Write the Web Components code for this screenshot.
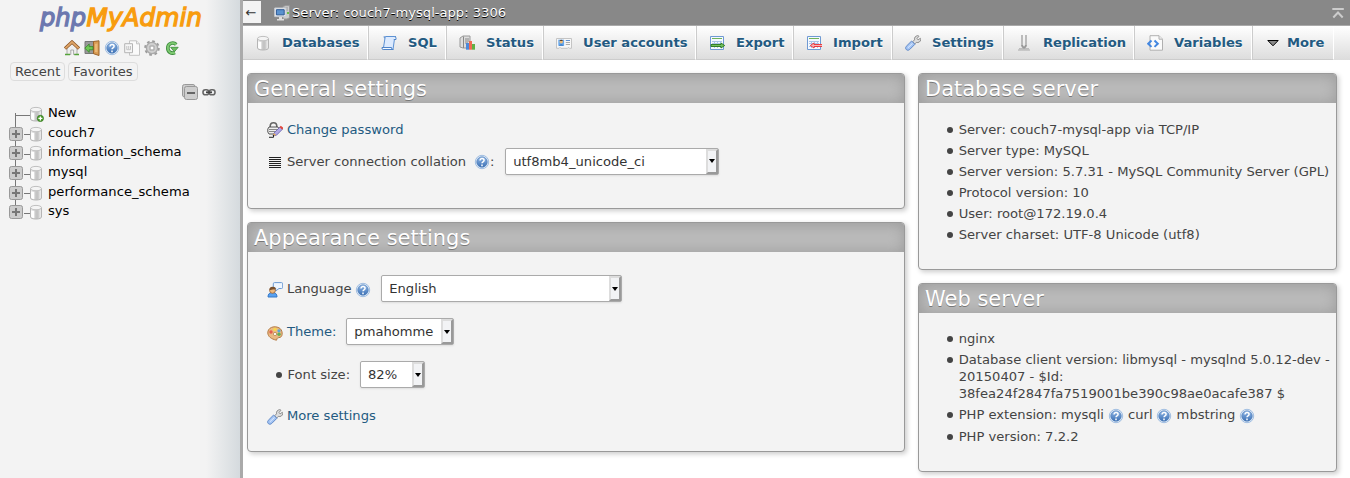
<!DOCTYPE html>
<html lang="en"><head><meta charset="utf-8"><title>phpMyAdmin</title>
<style>html,body{margin:0;height:100%;background:#fff;overflow:hidden}body{font:13.12px/17px "DejaVu Sans",sans-serif;color:#444}</style></head>
<body><pma-app></pma-app>
<script>
const cyl='<path d="M2.5 3.5v9.5c0 1.2 2.3 2 5.5 2s5.5-.8 5.5-2V3.5" fill="url(#c)" stroke="#b5b5b5"/><path d="M3.2 7v5.8q1.3 1.3 3 1.3V7z" fill="#fff"/><path d="M7.5 6.5h3v7.5h-3z" fill="#c4c4c4"/><ellipse cx="8" cy="3.6" rx="5.5" ry="2.2" fill="#f4f4f4" stroke="#c0c0c0"/>';
const defs='<defs><linearGradient id="c"><stop stop-color="#f6f6f6"/><stop offset=".6" stop-color="#c4c4c4"/><stop offset="1" stop-color="#f2f2f2"/></linearGradient><linearGradient id="b" x2="0" y2="1"><stop stop-color="#92b8e6"/><stop offset="1" stop-color="#3b70b5"/></linearGradient></defs>';
const sheet='<path d="M1.5 1.5h13v13h-13z" fill="#f5f9ff" stroke="#6f9ad3"/><path d="M3 3.5h10" stroke="#70b35b"/><path d="M3 6.5h10M3 8.5h10M3 11.5h10M5.5 6v7M8.5 6v7M11.5 6v7" stroke="#a9c4e8"/>';
const icons={
db:cyl,
newdb:cyl+'<circle cx="12.4" cy="12.4" r="3.1" fill="#4d9d2c" stroke="#2f741b" stroke-width=".7"/><path d="M12.4 10.4v4M10.4 12.4h4" stroke="#fff" stroke-width="1.3"/>',
home:'<path d="M3 8v6.5h3.8V10h2.8v4.5H13V8L8 3z" fill="#eee" stroke="#999" stroke-width=".8"/><path d="M1 8.6 8 2l7 6.6" fill="none" stroke="#8c5524" stroke-width="3.2"/><path d="M1.3 8.4 8 2.1l6.7 6.3" fill="none" stroke="#dfa568" stroke-width="1.8"/><path d="M1 14.5h5M10.3 14.5H15" stroke="#55a43b" stroke-width="1.5"/>',
exit:'<path d="M1 1.5h9v12H1z" fill="#999" stroke="#777"/><path d="M9.5 1.5 15 .8v14.7l-5.5-1.8z" fill="#d99b54" stroke="#9b642b"/><path d="m11 4 2.5-.4v8.7L11 12z" fill="#eab876"/><path d="M.8 8.2 5.2 4v2.6H9v3.2H5.2v2.6z" fill="#6fc855" stroke="#37842b" stroke-width=".8"/>',
help:'<circle cx="8" cy="8" r="6.7" fill="#edf4fc" stroke="#8aaedb" stroke-width=".8"/><circle cx="8" cy="8" r="5.3" fill="url(#b)" stroke="#4777b4" stroke-width=".6"/><path d="M6 6.5c0-2.8 4.1-2.5 4.1-.2C10.1 8 8 7.7 8 9.2M8 10.5v1.7" fill="none" stroke="#fff" stroke-width="1.5"/>',
docs:'<path d="M5.5.8h7l3 3v11.5h-10z" fill="#fafafa" stroke="#c4c4c4"/><path d="M12.5.8v3h3" fill="#eee" stroke="#c4c4c4"/><path d="M.7 3.7h7.8v9H.7z" fill="#f6f6f6" stroke="#b4b4b4"/><path d="M2.8 6v3.7h3.7V6M4.7 6v3" fill="none" stroke="#c4c4c4"/>',
gear:'<circle cx="8" cy="8" r="6.8" fill="none" stroke="#9c9c9c" stroke-width="2" stroke-dasharray="2.7 2.64"/><circle cx="8" cy="8" r="4.4" fill="none" stroke="#aaa" stroke-width="3.8"/><circle cx="8" cy="8" r="4" fill="none" stroke="#d0d0d0" stroke-width="1.8"/><circle cx="8" cy="8" r="2" fill="#fff" stroke="#888" stroke-width=".7"/>',
reload:'<path d="M12.2 4.6C9.3 1.6 3.8 3.2 3.8 8c0 4.2 3.5 6 7.2 4.6" fill="none" stroke="#3b8a3b" stroke-width="3.6"/><path d="M12.2 4.6C9.3 1.6 3.8 3.2 3.8 8c0 4.2 3.5 6 7.2 4.6" fill="none" stroke="#7cc870" stroke-width="2"/><path d="M6.6 7.3h7.6l-3.8 4.5z" fill="#6cbd60" stroke="#3b8a3b" stroke-width=".8"/>',
sql:'<path d="M5 1.5h10c-2 0-1.3 2.3-1.8 4.5L12 14.5H2.2L4 3Q3.7 1.4 5 1.5z" fill="#dceafe" stroke="#5c91d4"/><path d="M3.3 1.2q-1 1.2.7 2M1 12.5h9.5q0 2.5 1.8 2H2.3Q.5 14.4 1 12.5zM12.8 4.5H15q.8-2.5-1.5-3" fill="#f5faff" stroke="#4f84c9"/>',
status:'<path d="M1 3 4 1h7v12H4l-3-1z" fill="#ddd" stroke="#999"/><path d="M4.5 1.5V13M6 4h4M6 6h4M6 8h3" stroke="#888"/><path d="M7 8h3v6.7H7z" fill="#4b89dc"/><path d="M10 6h3v8.7h-3z" fill="#f06a52"/><path d="M13 9h3v5.7h-3z" fill="#60b044"/>',
users:'<path d="M.5 3.5h15v9.8h-2l-1-1-1 1H5l-1-1-1 1H.5z" fill="#f7f7f7" stroke="#c4c4c4"/><path d="M2.3 4.7h5.8v6H2.3z" fill="#67a8ee"/><circle cx="5.2" cy="6.8" r="1.7" fill="#eaba78"/><path d="M3.5 6q1.7-2.4 3.5 0z" fill="#573e27"/><path d="M2.5 10.7q2.7-3 5.5 0" fill="#3277c3"/><path d="M9.8 5.5H14" stroke="#6292d1"/><path d="M9.8 7.5H14M9.8 9.5H14" stroke="#aaa"/>',
exp:sheet+'<path d="M2 9.5h10V8l3.7 2.5L12 13v-1.5H2z" fill="#73c15f" stroke="#28761c" stroke-width=".9"/>',
imp:sheet+'<path d="M16.5 9.5H8V8l-3.7 2.5L8 13v-1.5h8.5z" fill="#f8b5b5" stroke="#ec2d32" stroke-width=".9"/>',
wrench:'<path d="m7.8 6.7 1.7-1.9Q9 1.4 12.8.6l1.2.7-2 2.1 1.1 1.5 2.2-1.6.6.8c-.3 2.9-2.5 3.9-4.6 3.3L9.5 9.2z" fill="#ddd" stroke="#8c8c8c"/><path d="m6.6 6 3.3 3.3-5.2 5.2C2.5 16.5-.7 14 1.2 11.4z" fill="#a5c5f4" stroke="#6089c7"/><path d="m3 12.7 4.6-4.4" stroke="#dceaff"/>',
repl:'<path d="M3 13.8h10M2 15h12" stroke="#aaa"/><path d="M6 0v10q0 1.5 2 3M10 0v10q0 1.5-2 3" fill="none" stroke="#999" stroke-width="2"/><path d="M6 0v10M10 0v10" stroke="#ddd"/>',
vars:'<path d="M3 .7h9l3.5 3.5v11H3z" fill="#fafafa" stroke="#b0b0b0"/><path d="M12 .7v3.5h3.5" fill="#eee" stroke="#b0b0b0"/><path d="m4.5 5.5-3.3 3.2 3.3 3.2M7.5 5.5l3.3 3.2-3.3 3.2" fill="none" stroke="#4387e0" stroke-width="2"/>',
more:'<path d="M2.8 5.5h10.4L8 10.8z" fill="#888" stroke="#000"/>',
server:'<path d="M9 1.5 11.5.7H15.5v12L13 14H9z" fill="#ccc" stroke="#999"/><path d="M10 3h4M10 5h4" stroke="#999"/><path d="M13 8h2" stroke="#68bd4a" stroke-width="2"/><path d="M.7 3h11.2v8.6H.7z" fill="#eee" stroke="#c5cbd2"/><path d="M2.4 4.7h7.8v5.2H2.4z" fill="#5a92cf" stroke="#2c5995"/><path d="M5 12h3v2h2v1.4H3V14h2z" fill="#ddd"/>',
password:'<path d="M3.2 7V4.4Q3.2.8 6.5.8t3.3 3.6V7" fill="none" stroke="#666" stroke-width="1.6"/><path d="M2 5h9l1 2v3l-2 2H2L.8 10V7z" fill="#eee" stroke="#555"/><path d="M2 7.5h9M2 9.5h9" stroke="#888"/><path d="m6 14 1-3 6-6 2.5 2.2-6 6z" fill="#b1a8e5" stroke="#6861aa" stroke-width=".8"/><path d="m12.5 5 1.3-1.2 2.5 2-1.3 1.7z" fill="#e2483b"/><path d="m6 14 .8-3L9 13z" fill="#e8ad45"/><path d="M2 15.3h4.5V13" fill="none" stroke="#222"/>',
lines:'<path d="M2 3.5h12M2 5.5h12M2 7.5h12M2 9.5h12M2 11.5h12M2 13.5h12" stroke="#222" stroke-width="1.15"/>',
lang:'<path d="M7.5.6h7q1.2 0 1.2 1.2v3.5q0 1.2-1.2 1.2H12L8.7 9V6.5H7.5Q6.3 6.5 6.3 5.3V1.8Q6.3.6 7.5.6z" fill="#eef6ff" stroke="#6d9bd3"/><path d="M1 15q0-4.5 4.5-4.5T10 15z" fill="#58a1f0" stroke="#3478c8"/><circle cx="5.5" cy="8.4" r="2.9" fill="#eeb97d" stroke="#8b552c" stroke-width=".7"/><path d="M2.5 8.3Q2 4.8 5.7 4.8T8.6 7.3Q5.8 7.4 2.5 8.3z" fill="#7a512d"/>',
palette:'<path d="M9.5 15.2C4 14 1 11.5.8 8 .6 2.6 7 .3 12 2.8c4 2 4 8.5 1.3 9.5-2.5.8-3 0-3.8 2.9z" fill="#e9b982" stroke="#b47b43"/><circle cx="4" cy="7" r="1.7" fill="#e45c50"/><circle cx="8" cy="4.4" r="1.7" fill="#f7d84a"/><circle cx="12" cy="5.8" r="1.6" fill="#5ea3da"/><circle cx="12" cy="9.2" r="1.7" fill="#61b054"/><circle cx="8" cy="9" r="1.6" fill="#fff" stroke="#a46b32" stroke-width=".6"/>',
collapse:'<rect x=".5" y=".5" width="12.5" height="12.5" rx="2" fill="#ccc" stroke="#999"/><rect x="2.5" y="2.5" width="13" height="13" rx="2" fill="#cecece" stroke="#999"/><path d="M5 9h8" stroke="#666" stroke-width="2"/>',
link:'<rect x="2" y="5.8" width="5.8" height="5" rx="2.3" fill="none" stroke="#666" stroke-width="1.6"/><rect x="8.2" y="5.8" width="5.8" height="5" rx="2.3" fill="none" stroke="#666" stroke-width="1.6"/><path d="M5 8.3h6" stroke="#444" stroke-width="1.8"/>',
plus:'<rect x="1.5" y="1.5" width="13" height="13" rx="2" fill="#ccc" stroke="#999"/><path d="M8 4v8M4 8h8" stroke="#777" stroke-width="2"/>',
top:'<path d="M2.3 4h11.5" stroke="#ccc" stroke-width="2"/><path d="m3.3 12.5 4.7-5 4.7 5" fill="none" stroke="#ccc" stroke-width="2"/>'
};
const define=(name,css,html)=>customElements.define(name,class extends HTMLElement{
  constructor(){super();this.attachShadow({mode:'open'}).innerHTML='<style>'+css+'</style>'+(typeof html==='function'?html(this):html)}
});
define('pma-icon',':host{display:inline-block;width:16px;height:16px;flex:none}svg{display:block}',e=>'<svg width="16" height="16" viewBox="0 0 16 16">'+defs+icons[e.getAttribute('name')]+'</svg>');
define('pma-tab',':host{display:flex;box-sizing:border-box;height:34px;align-items:center;border-left:1px solid #ccc;border-right:1px solid #fff;border-bottom:1px solid #ccc;padding-left:12px;font-weight:bold;color:#235a81;text-shadow:0 1px 0 #fff;white-space:nowrap}:host(:first-child){border-left:0}span{margin-left:var(--gap,11px)}',e=>'<pma-icon name="'+e.getAttribute('icon')+'"></pma-icon><span><slot></slot></span>');
define('pma-panel',':host{display:block;box-sizing:border-box;background:#f3f3f3;border:1px solid #999;border-radius:4px;box-shadow:2px 2px 5px #ccc;overflow:hidden}h2{box-sizing:border-box;margin:0;height:29px;font:20.99px/29px "DejaVu Sans",sans-serif;padding:1px 0 0 6px;color:#fff;text-shadow:0 1px 0 #777;background:#bbb;box-shadow:inset 1px 1px 15px #999}',e=>'<h2>'+e.getAttribute('heading')+'</h2><slot></slot>');
define('pma-row',':host{display:flex;align-items:center;height:43px;padding-left:19px;white-space:nowrap}:host([link]){color:#235a81}','<slot></slot>');
define('pma-select',':host{display:flex;box-sizing:border-box;height:27px;border:1px solid #aaa;border-radius:2px;background:#fff;color:#333;box-shadow:0 1px 2px #ddd}span{flex:1;padding-left:7.3px;line-height:25px}i{box-sizing:border-box;width:12px;border:2px solid;border-color:#ddd #999 #999 #ddd;background:#f2f3f5;display:flex;align-items:center;justify-content:center}i::after{content:"";border:3.5px solid transparent;border-top:4px solid #000;border-bottom:0}','<span><slot></slot></span><i></i>');
define('pma-item',':host{display:grid;grid-template-columns:12px 1fr;padding:2px 0 2px 27.7px}i{width:6px;height:6px;border-radius:50%;background:#444;margin-top:6px}div{white-space:nowrap}','<i></i><div><slot></slot></div>');
define('pma-node',':host{display:flex;height:19.6px;align-items:center;color:#000;padding-left:8px}b{width:16px;height:19.6px;display:flex;align-items:center;position:relative}b::before{content:"";position:absolute;left:7px;top:0;height:100%;width:1px;background:#777}:host([first]) b::before{top:10px}:host([last]) b::before{height:8px}b pma-icon{position:relative;margin-top:3px}i{width:6px;height:1px;background:#777;margin-top:5px}:host([first]) i{margin-left:-9px;width:15px}.db{margin:3px 0 0 -2px}span{margin-left:4px}',e=>'<b>'+(e.hasAttribute('first')?'':'<pma-icon name="plus"></pma-icon>')+'</b><i></i><pma-icon class="db" name="'+(e.hasAttribute('first')?'newdb':'db')+'"></pma-icon><span><slot></slot></span>');
define('pma-logo',':host{display:block;height:39px}svg{display:block}text{font-family:"DejaVu Sans",sans-serif;font-size:24.3px;font-style:italic;stroke-width:1.3}',
'<svg width="240" height="39"><text x="40" y="25.5" textLength="46" lengthAdjust="spacingAndGlyphs" fill="#6c78af" stroke="#6c78af">php</text><text x="86.5" y="25.5" textLength="115.5" lengthAdjust="spacingAndGlyphs" fill="#f89c0e" stroke="#f89c0e">MyAdmin</text></svg>');
define('pma-sidebar',':host{display:block;box-sizing:border-box;width:243px;height:478px;background:linear-gradient(to right,#f3f3f3 206px,#d2d8dc 243px);border-right:3px solid #aaa}.icons{display:flex;gap:4px;padding:1px 0 0 64px;height:22px}.quick{display:flex;gap:3px;padding-left:10px}.quick span{box-sizing:border-box;height:19px;border:1px solid #ddd;border-radius:4px;padding:0 4px;line-height:17px}.tools{display:flex;gap:3px;padding:3px 0 0 182px;height:19px}',
'<pma-logo></pma-logo><div class="icons">'+['home','exit','help','docs','gear','reload'].map(n=>'<pma-icon name="'+n+'"></pma-icon>').join('')+'</div><div class="quick"><span>Recent</span><span>Favorites</span></div><div class="tools"><pma-icon name="collapse"></pma-icon><pma-icon name="link"></pma-icon></div><div><pma-node first>New</pma-node><pma-node>couch7</pma-node><pma-node>information_schema</pma-node><pma-node>mysql</pma-node><pma-node>performance_schema</pma-node><pma-node last>sys</pma-node></div>');
define('pma-header',':host{display:flex;box-sizing:border-box;height:26px;background:#888;border-bottom:1px solid #aaa;color:#fff;text-shadow:0 1px 0 #000}.back{box-sizing:border-box;width:18px;height:22px;margin-top:1px;background:#f3f3f3;color:#333;text-align:center;line-height:24px;padding-right:2px;text-shadow:none}.server{margin:5px 2px 0 13px}.label{line-height:26px;flex:1}.top{margin:5px 4px 0 0}','<div class="back">←</div><pma-icon class="server" name="server"></pma-icon><span class="label">Server: couch7-mysql-app: 3306</span><pma-icon class="top" name="top"></pma-icon>');
const tabs=[['db','Databases',125],['sql','SQL',78],['status','Status',97],['users','User accounts',153],['exp','Export',97],['imp','Import',99],['wrench','Settings',111],['repl','Replication',131],['vars','Variables',118],['more','More',82]];
define('pma-app',':host{display:flex;width:1350px;height:478px}main{width:1107px}nav{display:flex;height:34px;background:linear-gradient(#fff,#dcdcdc)}.columns{display:flex;gap:13px;padding:13px 0 0 4px}.left{width:658px;display:grid;gap:13px;align-content:start}.right{width:419px;display:grid;gap:13px;align-content:start}.general{padding-top:10px}.general pma-row{height:32px}.appearance{padding-top:15px}.more{height:39px}pma-row pma-icon{margin:2px 3.9px 0 0}pma-row .h{margin:2px 0 0 3.7px}.bullet{width:6px;height:6px;border-radius:50%;background:#444;margin:1px 6px 0 8.5px}.q{vertical-align:-2px;height:13px;margin-left:-.3px}.db{padding-top:16px}.w{padding-top:15px}',
'<pma-sidebar></pma-sidebar><main><pma-header></pma-header><nav>'+tabs.map(t=>'<pma-tab icon="'+t[0]+'" style="width:'+t[2]+'px'+(t[0]=='more'?';--gap:6px':'')+'">'+t[1]+'</pma-tab>').join('')+'</nav><div class="columns"><div class="left">'+
'<pma-panel heading="General settings" style="height:136px"><div class="general"><pma-row link><pma-icon name="password"></pma-icon>Change password</pma-row><pma-row><pma-icon name="lines"></pma-icon>Server connection collation <pma-icon class="h" style="margin-left:8px" name="help"></pma-icon>:<pma-select style="width:214.5px;margin-left:10.3px">utf8mb4_unicode_ci</pma-select></pma-row></div></pma-panel>'+
'<pma-panel heading="Appearance settings" style="height:230px"><div class="appearance"><pma-row><pma-icon name="lang"></pma-icon>Language<pma-icon class="h" name="help"></pma-icon><pma-select style="width:241.5px;margin-left:9.7px">English</pma-select></pma-row><pma-row><pma-icon name="palette"></pma-icon><span style="color:#235a81">Theme:</span><pma-select style="width:107.7px;margin-left:9.5px">pmahomme</pma-select></pma-row><pma-row><span class="bullet"></span>Font size:<pma-select style="width:65.7px;margin-left:9.7px">82%</pma-select></pma-row><pma-row link class="more"><pma-icon name="wrench"></pma-icon>More settings</pma-row></div></pma-panel></div>'+
'<div class="right"><pma-panel heading="Database server" style="height:197px"><div class="db">'+['Server: couch7-mysql-app via TCP/IP','Server type: MySQL','Server version: 5.7.31 - MySQL Community Server (GPL)','Protocol version: 10','User: root@172.19.0.4','Server charset: UTF-8 Unicode (utf8)'].map(t=>'<pma-item>'+t+'</pma-item>').join('')+'</div></pma-panel>'+
'<pma-panel heading="Web server" style="height:189px"><div class="w"><pma-item>nginx</pma-item><pma-item>Database client version: libmysql - mysqlnd 5.0.12-dev -<br>20150407 - $Id:<br>38fea24f2847fa7519001be390c98ae0acafe387 $</pma-item><pma-item>PHP extension: mysqli <pma-icon class="q" name="help"></pma-icon> curl <pma-icon class="q" name="help"></pma-icon> mbstring <pma-icon class="q" name="help"></pma-icon></pma-item><pma-item style="margin-top:1px">PHP version: 7.2.2</pma-item></div></pma-panel></div></div></main>');
</script></body></html>
